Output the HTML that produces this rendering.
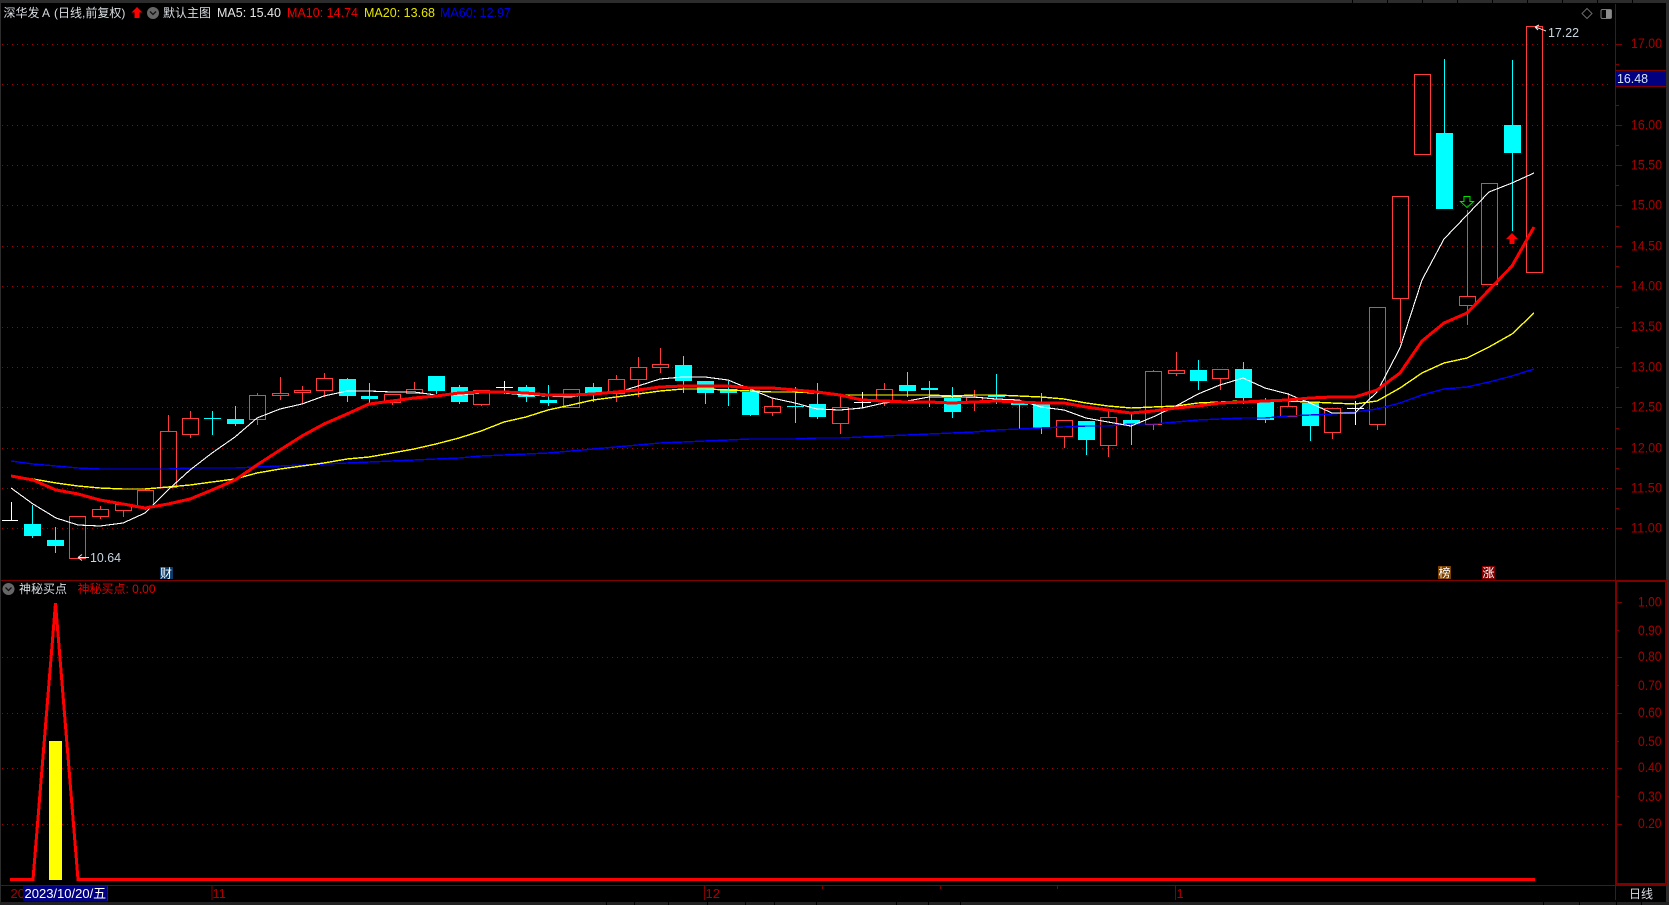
<!DOCTYPE html>
<html><head><meta charset="utf-8"><title>深华发A</title>
<style>
html,body{margin:0;padding:0;background:#000;width:1669px;height:905px;overflow:hidden}
svg{display:block;font-family:"Liberation Sans","Noto Sans CJK SC",sans-serif}
.c{shape-rendering:crispEdges}
.ax text{fill:#a80000;font-size:13.5px}
</style></head><body>
<svg width="1669" height="905" viewBox="0 0 1669 905" xmlns="http://www.w3.org/2000/svg">
<rect width="1669" height="905" fill="#000"/>
<!-- window frame -->
<g class="c">
<rect x="0" y="0" width="1669" height="3" fill="#2c2c2c"/>
<rect x="0" y="0" width="1" height="905" fill="#2c2c2c"/>
<rect x="1666" y="0" width="3" height="905" fill="#2c2c2c"/>
<rect x="0" y="902" width="1669" height="3" fill="#222"/>
<path d="M1352.5 0V3M1387.5 0V3M1422.5 0V3M1457.5 0V3M1492.5 0V3M1527.5 0V3M1562.5 0V3M1597.5 0V3M1632.5 0V3M606.5 902V905M634.5 902V905M668.5 902V905M707.5 902V905M745.5 902V905M774.5 902V905M816.5 902V905M896.5 902V905M928.5 902V905M960.5 902V905M1543.5 902V905M1579.5 902V905M1616.5 902V905M1641.5 902V905" stroke="#000"/>
</g>
<!-- grid -->
<g class="c" stroke="#a00000" stroke-width="1" stroke-dasharray="1 4" fill="none">
<path d="M2 44.5H1612M2 84.5H1612M2 125.5H1612M2 165.5H1612M2 205.5H1612M2 246.5H1612M2 286.5H1612M2 327.5H1612M2 367.5H1612M2 407.5H1612M2 448.5H1612M2 488.5H1612M2 528.5H1612"/>
<path d="M2 657.5H1612M2 713.5H1612M2 768.5H1612M2 824.5H1612"/>
</g>
<!-- axes -->
<g class="c" stroke="#800000" fill="none">
<path d="M1615.5 4V895"/>
<path d="M1 580.5H1666"/>
<path d="M1 885.5H1666" stroke-width="1"/>
<rect x="1616" y="581" width="50" height="303" stroke-width="2"/>
<path d="M212 886V900M704.5 886V900M1175.5 886V900M822.5 886V889M940.5 886V889M1057.5 886V889M1615.5 886V900"/>
<!-- price ticks -->
<path d="M1616 44.5h6M1616 64.5h3M1616 84.5h6M1616 105.5h3M1616 125.5h6M1616 145.5h3M1616 165.5h6M1616 185.5h3M1616 205.5h6M1616 226.5h3M1616 246.5h6M1616 266.5h3M1616 286.5h6M1616 307.5h3M1616 327.5h6M1616 347.5h3M1616 367.5h6M1616 387.5h3M1616 407.5h6M1616 428.5h3M1616 448.5h6M1616 468.5h3M1616 488.5h6M1616 508.5h3M1616 528.5h6"/>
<path d="M1617 602.5h5M1617 630.5h2M1617 657.5h5M1617 685.5h2M1617 713.5h5M1617 741.5h2M1617 768.5h5M1617 796.5h2M1617 824.5h5"/>
</g>
<!-- red candles -->
<path class="c" fill="none" stroke="#ff3c3c" stroke-width="1" d="
M69.5 516.5h16v42h-16z
M92.5 509.5h16v7h-16zM100.5 506V509M100.5 516V519
M115.5 504.5h16v6h-16zM123.5 503V504M123.5 510V517
M137.5 490.5h16v17h-16zM145.5 488V490M145.5 507V510
M160.5 431.5h16v56h-16zM168.5 415V431
M182.5 418.5h16v16h-16zM190.5 411V418M190.5 434V438
M249.5 395.5h16v24h-16zM257.5 393V395M257.5 419V425
M272.5 393.5h16v2h-16zM280.5 377V393M280.5 395V400
M294.5 390.5h16v2h-16zM302.5 386V390M302.5 392V404
M316.5 378.5h16v12h-16zM324.5 373V378M324.5 390V397
M384.5 394.5h16v8h-16zM392.5 402V405
M406.5 389.5h16v4h-16zM414.5 382V389
M473.5 390.5h16v14h-16zM481.5 404V406
M563.5 389.5h16v18h-16z
M608.5 379.5h16v14h-16zM616.5 375V379M616.5 393V402
M630.5 367.5h16v12h-16zM638.5 357V367M638.5 379V397
M652.5 364.5h16v3h-16zM660.5 348V364M660.5 367V373
M764.5 406.5h16v6h-16zM772.5 398V406M772.5 412V416
M832.5 407.5h16v16h-16zM840.5 396V407M840.5 423V434
M876.5 389.5h16v12h-16zM884.5 383V389M884.5 401V406
M966.5 397.5h16v4h-16zM974.5 390V397M974.5 401V411
M1056.5 420.5h16v16h-16zM1064.5 436V448
M1100.5 417.5h16v28h-16zM1108.5 411V417M1108.5 445V457
M1145.5 371.5h16v53h-16zM1153.5 370V371M1153.5 424V430
M1168.5 370.5h16v3h-16zM1176.5 352V370M1176.5 373V376
M1212.5 369.5h16v9h-16zM1220.5 378V390
M1280.5 406.5h16v10h-16zM1288.5 393V406
M1324.5 408.5h16v24h-16zM1332.5 432V439
M1369.5 307.5h16v117h-16zM1377.5 424V430
M1392.5 196.5h16v102h-16zM1400.5 298V343
M1414.5 74.5h16v80h-16z
M1459.5 296.5h16v9h-16zM1467.5 210V296M1467.5 305V325
M1481.5 183.5h16v101h-16z
M1526.5 26.5h16v246h-16z"/>
<!-- cyan candles -->
<path class="c" fill="none" stroke="#00ffff" stroke-width="1" d="
M32.5 505V538M55.5 527V553M212.5 411V435M204 418.5H221M235.5 406V426M347.5 378V402M369.5 383V403M436.5 376V394M459.5 385V404M526.5 385V402M548.5 385V406M593.5 383V402M683.5 356V393M705.5 381V404M728.5 381V406M750.5 389V416M795.5 387V423M787 406.5H804M817.5 383V419M907.5 372V397M929.5 381V407M952.5 387V418M996.5 374V404M1019.5 400V429M1041.5 393V434M1086.5 421V455M1131.5 414V445M1198.5 360V390M1243.5 362V404M1265.5 398V423M1310.5 403V441M1444.5 59V209M1512.5 60V231"/>
<path class="c" fill="#00ffff" d="
M24 524h17v12h-17zM47 540h17v6h-17zM227 419h17v5h-17zM339 379h17v17h-17zM361 396h17v3h-17zM428 376h17v15h-17zM451 387h17v15h-17zM518 387h17v10h-17zM540 400h17v3h-17zM585 387h17v6h-17zM675 365h17v16h-17zM697 381h17v12h-17zM720 389h17v4h-17zM742 392h17v23h-17zM809 404h17v13h-17zM899 385h17v6h-17zM921 388h17v2h-17zM944 398h17v14h-17zM988 395h17v2h-17zM1011 403h17v2h-17zM1033 404h17v24h-17zM1078 421h17v19h-17zM1123 420h17v4h-17zM1190 370h17v11h-17zM1235 369h17v29h-17zM1257 400h17v20h-17zM1302 403h17v23h-17zM1436 133h17v76h-17zM1504 125h17v28h-17z"/>
<!-- white dojis -->
<path class="c" fill="none" stroke="#fff" stroke-width="1" d="M11.5 502V520M2 520.5H18M504.5 381V394M496 387.5H513M862.5 392V408M854 402.5H871M1355.5 401V425M1347 408.5H1364"/>
<!-- moving averages -->
<g class="c" fill="none" stroke-linejoin="round">
<polyline stroke="#0000ff" stroke-width="1.4" points="11,461 33,464 56,466 78,468 100,469 123,469 145,469 168,469 190,468 212,468 235,468 257,467 280,466 302,465 324,464 347,463 369,462 392,461 414,460 436,459 459,458 481,456 504,455 526,454 548,453 571,451 593,449 616,447 638,445 660,443 683,442 705,441 728,440 750,439 772,439 795,439 817,438 840,438 862,437 884,436 907,435 929,434 952,433 974,432 996,430 1019,429 1041,428 1064,427 1086,426 1108,426 1131,424 1153,424 1176,422 1198,420 1220,419 1243,418 1265,418 1288,416 1310,415 1332,414 1355,412 1377,409 1400,403 1422,395 1444,389 1467,387 1489,382 1512,376 1534,369"/>
<polyline stroke="#ffff00" stroke-width="1.4" points="11,476 33,479 56,483 78,486 100,488 123,489 145,489 168,487 190,485 212,482 235,479 257,473 280,469 302,466 324,463 347,459 369,457 392,453 414,449 436,444 459,438 481,431 504,422 526,417 548,410 571,405 593,400 616,397 638,394 660,391 683,389 705,389 728,390 750,391 772,392 795,392 817,393 840,395 862,395 884,395 907,395 929,395 952,396 974,395 996,395 1019,396 1041,397 1064,399 1086,403 1108,406 1131,408 1153,407 1176,406 1198,403 1220,402 1243,401 1265,401 1288,401 1310,402 1332,403 1355,404 1377,401 1400,388 1422,373 1444,363 1467,358 1489,347 1512,334 1534,313"/>
<polyline stroke="#ffffff" stroke-width="1.1" points="11,488 33,504 56,518 78,525 100,526 123,523 145,513 168,490 190,470 212,453 235,437 257,418 280,409 302,404 324,396 347,391 369,391 392,392 414,392 436,395 459,395 481,393 504,393 526,395 548,396 571,397 593,393 616,393 638,386 660,379 683,377 705,377 728,380 750,389 772,398 795,403 817,409 840,410 862,408 884,403 907,401 929,397 952,397 974,397 996,399 1019,400 1041,407 1064,410 1086,418 1108,422 1131,426 1153,417 1176,406 1198,394 1220,385 1243,378 1265,388 1288,394 1310,403 1332,413 1355,413 1377,392 1400,348 1422,280 1444,239 1467,215 1489,192 1512,183 1534,173"/>
<polyline stroke="#ff0000" stroke-width="3" points="11,476 33,480 56,490 78,494 100,500 123,504 145,508 168,504 190,499 212,490 235,480 257,465 280,450 302,436 324,424 347,414 369,404 392,401 414,398 436,396 459,393 481,392 504,392 526,393 548,395 571,395 593,394 616,392 638,390 660,387 683,386 705,386 728,386 750,388 772,388 795,390 817,392 840,395 862,400 884,401 907,402 929,402 952,403 974,402 996,401 1019,402 1041,403 1064,403 1086,407 1108,410 1131,413 1153,411 1176,408 1198,406 1220,403 1243,402 1265,401 1288,400 1310,398 1332,397 1355,397 1377,390 1400,373 1422,341 1444,323 1467,313 1489,290 1512,266 1534,227"/>
</g>
<!-- markers -->
<path d="M1464 196.5h6v5h3.5l-6.500 6-6.500-6h3.500z" fill="none" stroke="#00e000" stroke-width="1"/>
<path d="M1512 233l6 6h-3.500v5h-5v-5H1506z" fill="#f00"/>
<path d="M78 557.500H89M78 557.500l4-3M78 557.500l4 3" stroke="#e8e8e8" fill="none" stroke-width="1"/>
<path d="M1535 27l4-2M1535 27l3 3M1535 27c4 1 8 3 11 4" stroke="#e8e8e8" fill="none" stroke-width="1"/>
<text x="90" y="562" fill="#c9d6e2" font-size="13px" textLength="31" lengthAdjust="spacingAndGlyphs">10.64</text>
<text x="1548" y="37" fill="#c9d6e2" font-size="13px" textLength="31" lengthAdjust="spacingAndGlyphs">17.22</text>
<!-- badges -->
<rect class="c" x="160" y="567" width="13" height="12" fill="#0b3a68"/>
<text x="160" y="577.500" fill="#fff" font-size="12px">财</text>
<rect class="c" x="1438" y="566" width="13" height="13" fill="#7a4000"/>
<text x="1438.500" y="577" fill="#fff" font-size="12px">榜</text>
<rect class="c" x="1482" y="566" width="13" height="13" fill="#800000"/>
<text x="1482.500" y="577" fill="#fff" font-size="12px">涨</text>
<!-- title bar -->
<text x="3.500" y="17" fill="#d8dde2" font-size="12px">深华发</text>
<text x="42" y="17" fill="#d8dde2" font-size="12px">A</text>
<text x="54" y="17" fill="#d8dde2" font-size="12px">(日线,前复权)</text>
<path d="M137 7l5.500 5.500h-3V18h-5v-5.500h-3z" fill="#f00"/>
<circle cx="153" cy="13" r="6" fill="#666"/>
<path d="M150 11.500l3 3 3-3" stroke="#111" stroke-width="1.300" fill="none"/>
<text x="163" y="17" fill="#d8dde2" font-size="12px">默认主图</text>
<text x="217" y="17" fill="#e6e6e6" font-size="12.500px">MA5: 15.40</text>
<text x="287" y="17" fill="#ee0000" font-size="12.500px" textLength="71">MA10: 14.74</text>
<text x="364" y="17" fill="#e6e600" font-size="12.500px" textLength="71">MA20: 13.68</text>
<text x="440" y="17" fill="#0000e6" font-size="12.500px" textLength="71">MA60: 12.97</text>
<path d="M1587 8.500l5 5-5 5-5-5z" stroke="#6a6a6a" fill="none"/>
<rect x="1601" y="9.500" width="10.500" height="9" rx="1.500" fill="none" stroke="#7a7a7a"/>
<rect class="c" x="1606" y="10" width="5" height="8" fill="#8a8a8a"/>
<!-- upper axis labels -->
<g class="ax">
<text x="1631" y="48" textLength="31" lengthAdjust="spacingAndGlyphs">17.00</text>
<text x="1631" y="129.500" textLength="31" lengthAdjust="spacingAndGlyphs">16.00</text>
<text x="1631" y="169.500" textLength="31" lengthAdjust="spacingAndGlyphs">15.50</text>
<text x="1631" y="209.500" textLength="31" lengthAdjust="spacingAndGlyphs">15.00</text>
<text x="1631" y="250.500" textLength="31" lengthAdjust="spacingAndGlyphs">14.50</text>
<text x="1631" y="290.500" textLength="31" lengthAdjust="spacingAndGlyphs">14.00</text>
<text x="1631" y="331" textLength="31" lengthAdjust="spacingAndGlyphs">13.50</text>
<text x="1631" y="371.500" textLength="31" lengthAdjust="spacingAndGlyphs">13.00</text>
<text x="1631" y="411.500" textLength="31" lengthAdjust="spacingAndGlyphs">12.50</text>
<text x="1631" y="452.500" textLength="31" lengthAdjust="spacingAndGlyphs">12.00</text>
<text x="1631" y="492.500" textLength="31" lengthAdjust="spacingAndGlyphs">11.50</text>
<text x="1631" y="532.500" textLength="31" lengthAdjust="spacingAndGlyphs">11.00</text>
</g>
<rect class="c" x="1616" y="71" width="50" height="16" fill="#000080"/>
<path class="c" d="M1616 70.500H1666M1616 86.500H1666" stroke="#800000"/>
<text x="1617" y="83" fill="#d6e4f0" font-size="13px" textLength="31" lengthAdjust="spacingAndGlyphs">16.48</text>
<!-- lower panel -->
<circle cx="8.500" cy="589" r="6" fill="#666"/>
<path d="M5.500 587.500l3 3 3-3" stroke="#111" stroke-width="1.300" fill="none"/>
<text x="19" y="593" fill="#d8dde2" font-size="12px">神秘买点</text>
<text x="77.500" y="593" fill="#e00000" font-size="12px">神秘买点: 0.00</text>
<rect class="c" x="49" y="741" width="13" height="139" fill="#ffff00"/>
<path class="c" d="M10 879.500H33L55.500 603L78 879.500H1535" fill="none" stroke="#f00" stroke-width="3"/>
<g class="ax">
<text x="1638" y="606.500" textLength="23.500" lengthAdjust="spacingAndGlyphs">1.00</text>
<text x="1638" y="635" textLength="23.500" lengthAdjust="spacingAndGlyphs">0.90</text>
<text x="1638" y="661" textLength="23.500" lengthAdjust="spacingAndGlyphs">0.80</text>
<text x="1638" y="690" textLength="23.500" lengthAdjust="spacingAndGlyphs">0.70</text>
<text x="1638" y="717" textLength="23.500" lengthAdjust="spacingAndGlyphs">0.60</text>
<text x="1638" y="746" textLength="23.500" lengthAdjust="spacingAndGlyphs">0.50</text>
<text x="1638" y="772" textLength="23.500" lengthAdjust="spacingAndGlyphs">0.40</text>
<text x="1638" y="801" textLength="23.500" lengthAdjust="spacingAndGlyphs">0.30</text>
<text x="1638" y="828" textLength="23.500" lengthAdjust="spacingAndGlyphs">0.20</text>
</g>
<!-- date row -->
<text x="10.500" y="898" fill="#a80000" font-size="13px">20</text>
<rect class="c" x="23" y="886" width="85" height="15" fill="#000080"/>
<path class="c" d="M107.500 886V901" stroke="#800000"/>
<text x="24.500" y="898" fill="#fff" font-size="13px">2023/10/20/五</text>
<text x="212.500" y="898" fill="#a80000" font-size="13px">11</text>
<text x="705.500" y="898" fill="#a80000" font-size="13px">12</text>
<text x="1176.500" y="898" fill="#a80000" font-size="13px">1</text>
<text x="1629" y="898" fill="#d8dde2" font-size="12px">日线</text>
</svg>
</body></html>
